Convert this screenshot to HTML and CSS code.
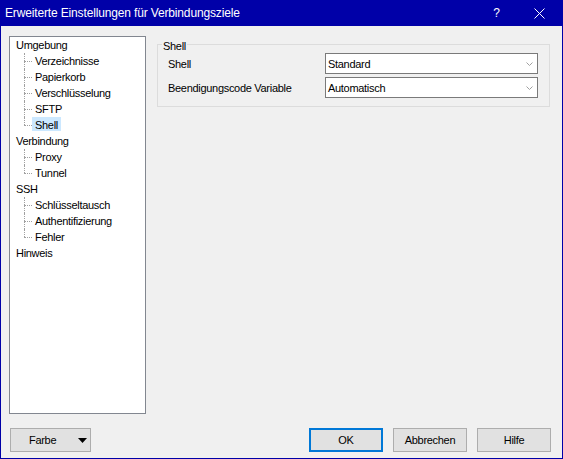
FILE: index.html
```html
<!DOCTYPE html>
<html lang="de">
<head>
<meta charset="utf-8">
<title>Erweiterte Einstellungen für Verbindungsziele</title>
<link rel="stylesheet" href="styles.css">
</head>
<body>
<div class="window">
  <div class="titlebar">
    <span class="title">Erweiterte Einstellungen für Verbindungsziele</span>
    <span class="cap cap-help">?</span>
    <span class="cap cap-close"><svg width="11" height="11" viewBox="0 0 11 11"><path d="M0.5 0.5L10.5 10.5M10.5 0.5L0.5 10.5" stroke="#ffffff" stroke-width="1" fill="none"/></svg></span>
  </div>
  <div class="content">
    <div class="main">
      <ul class="tree">
        <li class="node"><span class="label">Umgebung</span>
          <ul class="children">
            <li class="child"><span class="label">Verzeichnisse</span></li>
            <li class="child"><span class="label">Papierkorb</span></li>
            <li class="child"><span class="label">Verschlüsselung</span></li>
            <li class="child"><span class="label">SFTP</span></li>
            <li class="child"><span class="label sel">Shell</span></li>
          </ul>
        </li>
        <li class="node"><span class="label">Verbindung</span>
          <ul class="children">
            <li class="child"><span class="label">Proxy</span></li>
            <li class="child"><span class="label">Tunnel</span></li>
          </ul>
        </li>
        <li class="node"><span class="label">SSH</span>
          <ul class="children">
            <li class="child"><span class="label">Schlüsseltausch</span></li>
            <li class="child"><span class="label">Authentifizierung</span></li>
            <li class="child"><span class="label">Fehler</span></li>
          </ul>
        </li>
        <li class="node"><span class="label">Hinweis</span></li>
      </ul>
      <div class="panel">
        <div class="group">
          <span class="legend">Shell</span>
          <div class="grid">
            <span class="lbl">Shell</span>
            <div class="combo"><span>Standard</span><svg width="7" height="4" viewBox="0 0 7 4"><path d="M0.5 0.5L3.5 3.5L6.5 0.5" stroke="#a0a0a0" stroke-width="1" fill="none"/></svg></div>
            <span class="lbl">Beendigungscode Variable</span>
            <div class="combo"><span>Automatisch</span><svg width="7" height="4" viewBox="0 0 7 4"><path d="M0.5 0.5L3.5 3.5L6.5 0.5" stroke="#a0a0a0" stroke-width="1" fill="none"/></svg></div>
          </div>
        </div>
      </div>
    </div>
    <div class="footer">
      <div class="btn btn-split"><span>Farbe</span><svg width="9" height="5" viewBox="0 0 9 5"><path d="M0 0H9L4.5 5Z" fill="#000000"/></svg></div>
      <div class="spacer"></div>
      <div class="btn btn-default">OK</div>
      <div class="btn">Abbrechen</div>
      <div class="btn">Hilfe</div>
    </div>
  </div>
</div>
</body>
</html>
```
FILE: styles.css
```css
html, body {
  margin: 0;
  padding: 0;
  background: #f0f0f0;
}

body {
  font-family: "Liberation Sans", Arial, sans-serif;
  font-size: 11px;
  letter-spacing: -0.3px;
  color: #000000;
}

.window {
  width: 563px;
  height: 459px;
  box-sizing: border-box;
  border: 1px solid #0000a8;
  border-top: none;
  background: #f0f0f0;
  display: flex;
  flex-direction: column;
}

.titlebar {
  height: 26px;
  flex: none;
  background: #0000a8;
  color: #ffffff;
  display: flex;
  align-items: center;
  padding-left: 4px;
}

.title {
  flex: 1;
  font-size: 12px;
  letter-spacing: -0.15px;
  line-height: 26px;
}

.cap {
  height: 26px;
  display: flex;
  align-items: center;
  justify-content: center;
}

.cap-help {
  width: 39px;
  font-size: 12px;
  letter-spacing: 0;
}

.cap-close {
  width: 46px;
}

.content {
  flex: 1;
  display: flex;
  flex-direction: column;
  padding: 10px 12px 6px 8px;
}

.main {
  display: flex;
  height: 378px;
}

.tree {
  list-style: none;
  margin: 0;
  padding: 0;
  width: 137px;
  height: 378px;
  box-sizing: border-box;
  border: 1px solid #828790;
  background: #ffffff;
}

.tree ul {
  list-style: none;
  margin: 0;
  padding: 0;
}

.node {
  line-height: 16px;
  padding-left: 3px;
}

.children {
  margin-left: -3px !important;
}

.child {
  position: relative;
  height: 16px;
  line-height: 16px;
  padding-left: 22px;
}

.child::before {
  content: "";
  position: absolute;
  left: 14px;
  top: 8px;
  width: 8px;
  border-top: 1px dotted #a0a0a0;
}

.child::after {
  content: "";
  position: absolute;
  left: 14px;
  top: 0;
  bottom: 0;
  border-left: 1px dotted #a0a0a0;
}

.child:last-child::after {
  bottom: 8px;
}

.label {
  display: inline-block;
  line-height: 12px;
  padding: 2px 3px 0 3px;
  vertical-align: top;
}

.sel {
  background: #cce8ff;
}

.panel {
  flex: 1;
  margin-left: 11px;
}

.group {
  position: relative;
  margin-top: 8px;
  border: 1px solid #dcdcdc;
  padding: 8px 11px 8px 10px;
}

.legend {
  position: absolute;
  left: 4px;
  top: -5px;
  padding: 0 1px;
  line-height: 13px;
  background: #f0f0f0;
}

.grid {
  display: grid;
  grid-template-columns: 157px 1fr;
  row-gap: 3px;
  align-items: center;
}

.combo {
  height: 21px;
  box-sizing: border-box;
  border: 1px solid #7a7a7a;
  background: #ffffff;
  display: flex;
  align-items: center;
  justify-content: space-between;
  padding: 0 4px 0 2px;
}

.footer {
  display: flex;
  margin-top: 14px;
  margin-left: 1px;
  margin-right: -1px;
  gap: 10px;
}

.spacer {
  flex: 1;
}

.btn {
  width: 74px;
  height: 24px;
  box-sizing: border-box;
  border: 1px solid #adadad;
  background: #e1e1e1;
  display: flex;
  align-items: center;
  justify-content: center;
}

.btn-default {
  border: 2px solid #0078d7;
}

.btn-split {
  width: 81px;
  justify-content: flex-start;
  padding-left: 18px;
}

.btn-split svg {
  margin-left: 22px;
}
```
